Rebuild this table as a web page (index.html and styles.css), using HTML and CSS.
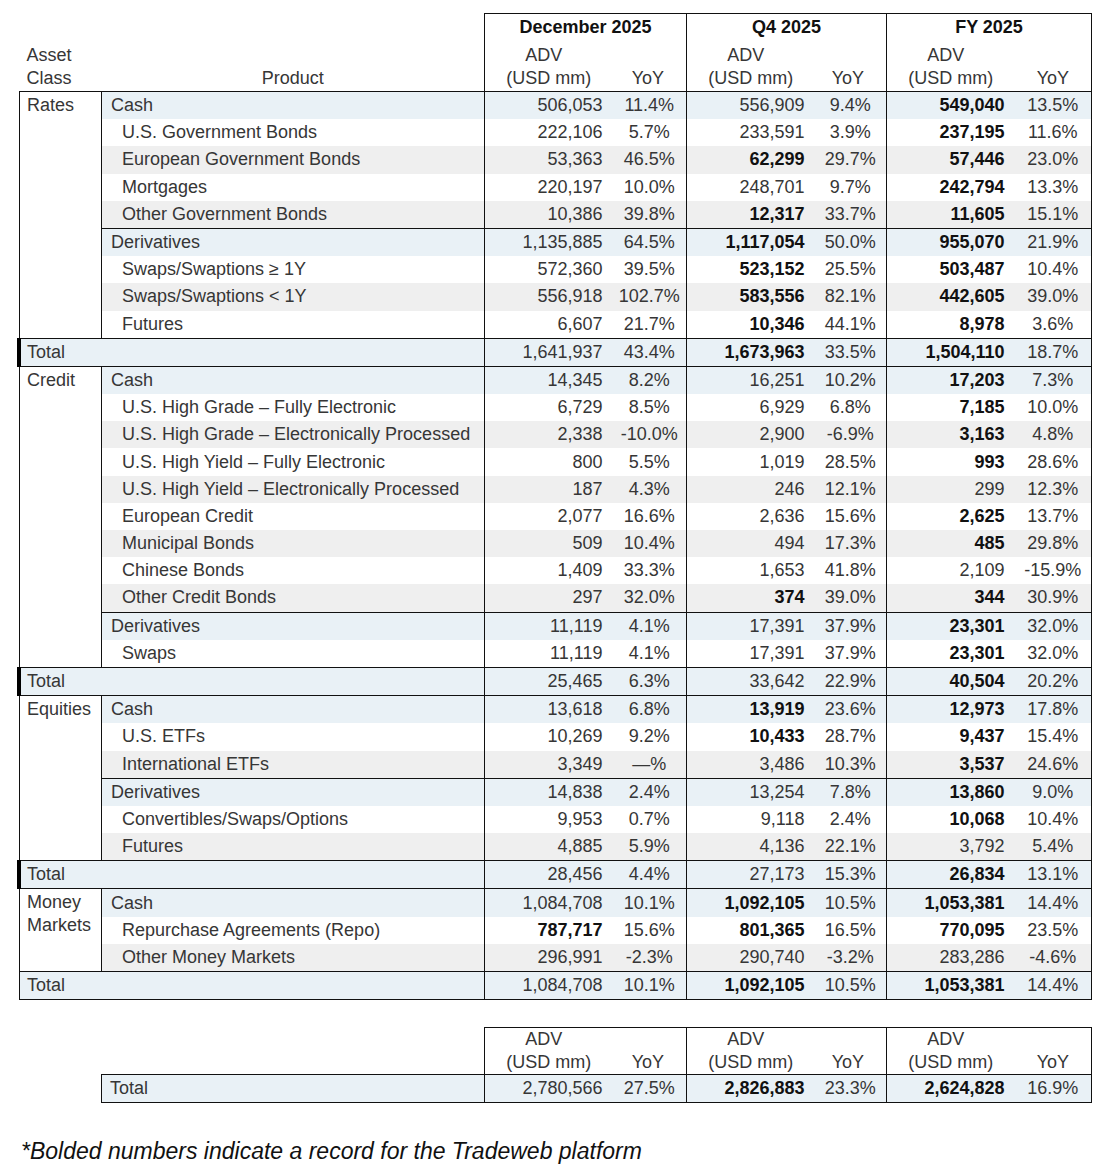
FILE: index.html
```html
<!DOCTYPE html>
<html lang="en">
<head>
<meta charset="utf-8">
<title>Tradeweb ADV</title>
<link rel="stylesheet" href="styles.css">
</head>
<body>
<div class="page">
<table class="adv">
  <colgroup>
    <col class="c-asset"><col class="c-prod">
    <col class="c-num"><col class="c-yoy1">
    <col class="c-num"><col class="c-yoy2">
    <col class="c-num"><col class="c-yoy3">
  </colgroup>
  <thead>
    <tr class="h1">
      <th colspan="2" class="blank"></th>
      <th colspan="2" class="sec">December 2025</th>
      <th colspan="2" class="sec">Q4 2025</th>
      <th colspan="2" class="sec">FY 2025</th>
    </tr>
    <tr class="h2">
      <th class="asset-h">Asset<br>Class</th>
      <th class="prod-h">Product</th>
      <th class="adv-h"><span class="adv-l">ADV</span><br>(USD mm)</th><th class="yoy-h">YoY</th>
      <th class="adv-h"><span class="adv-l">ADV</span><br>(USD mm)</th><th class="yoy-h">YoY</th>
      <th class="adv-h"><span class="adv-l">ADV</span><br>(USD mm)</th><th class="yoy-h">YoY</th>
    </tr>
  </thead>
  <tbody>
    <tr class="cat"><td class="asset" rowspan="9">Rates</td><td class="prod">Cash</td><td>506,053</td><td>11.4%</td><td>556,909</td><td>9.4%</td><td><b>549,040</b></td><td>13.5%</td></tr>
    <tr class="sub"><td class="prod">U.S. Government Bonds</td><td>222,106</td><td>5.7%</td><td>233,591</td><td>3.9%</td><td><b>237,195</b></td><td>11.6%</td></tr>
    <tr class="sub alt"><td class="prod">European Government Bonds</td><td>53,363</td><td>46.5%</td><td><b>62,299</b></td><td>29.7%</td><td><b>57,446</b></td><td>23.0%</td></tr>
    <tr class="sub"><td class="prod">Mortgages</td><td>220,197</td><td>10.0%</td><td>248,701</td><td>9.7%</td><td><b>242,794</b></td><td>13.3%</td></tr>
    <tr class="sub alt"><td class="prod">Other Government Bonds</td><td>10,386</td><td>39.8%</td><td><b>12,317</b></td><td>33.7%</td><td><b>11,605</b></td><td>15.1%</td></tr>
    <tr class="cat split"><td class="prod">Derivatives</td><td>1,135,885</td><td>64.5%</td><td><b>1,117,054</b></td><td>50.0%</td><td><b>955,070</b></td><td>21.9%</td></tr>
    <tr class="sub"><td class="prod">Swaps/Swaptions ≥ 1Y</td><td>572,360</td><td>39.5%</td><td><b>523,152</b></td><td>25.5%</td><td><b>503,487</b></td><td>10.4%</td></tr>
    <tr class="sub alt"><td class="prod">Swaps/Swaptions &lt; 1Y</td><td>556,918</td><td>102.7%</td><td><b>583,556</b></td><td>82.1%</td><td><b>442,605</b></td><td>39.0%</td></tr>
    <tr class="sub"><td class="prod">Futures</td><td>6,607</td><td>21.7%</td><td><b>10,346</b></td><td>44.1%</td><td><b>8,978</b></td><td>3.6%</td></tr>
    <tr class="total"><td colspan="2" class="tot mark">Total</td><td>1,641,937</td><td>43.4%</td><td><b>1,673,963</b></td><td>33.5%</td><td><b>1,504,110</b></td><td>18.7%</td></tr>

    <tr class="cat"><td class="asset" rowspan="11">Credit</td><td class="prod">Cash</td><td>14,345</td><td>8.2%</td><td>16,251</td><td>10.2%</td><td><b>17,203</b></td><td>7.3%</td></tr>
    <tr class="sub"><td class="prod">U.S. High Grade – Fully Electronic</td><td>6,729</td><td>8.5%</td><td>6,929</td><td>6.8%</td><td><b>7,185</b></td><td>10.0%</td></tr>
    <tr class="sub alt"><td class="prod">U.S. High Grade – Electronically Processed</td><td>2,338</td><td>-10.0%</td><td>2,900</td><td>-6.9%</td><td><b>3,163</b></td><td>4.8%</td></tr>
    <tr class="sub"><td class="prod">U.S. High Yield – Fully Electronic</td><td>800</td><td>5.5%</td><td>1,019</td><td>28.5%</td><td><b>993</b></td><td>28.6%</td></tr>
    <tr class="sub alt"><td class="prod">U.S. High Yield – Electronically Processed</td><td>187</td><td>4.3%</td><td>246</td><td>12.1%</td><td>299</td><td>12.3%</td></tr>
    <tr class="sub"><td class="prod">European Credit</td><td>2,077</td><td>16.6%</td><td>2,636</td><td>15.6%</td><td><b>2,625</b></td><td>13.7%</td></tr>
    <tr class="sub alt"><td class="prod">Municipal Bonds</td><td>509</td><td>10.4%</td><td>494</td><td>17.3%</td><td><b>485</b></td><td>29.8%</td></tr>
    <tr class="sub"><td class="prod">Chinese Bonds</td><td>1,409</td><td>33.3%</td><td>1,653</td><td>41.8%</td><td>2,109</td><td>-15.9%</td></tr>
    <tr class="sub alt"><td class="prod">Other Credit Bonds</td><td>297</td><td>32.0%</td><td><b>374</b></td><td>39.0%</td><td><b>344</b></td><td>30.9%</td></tr>
    <tr class="cat split"><td class="prod">Derivatives</td><td>11,119</td><td>4.1%</td><td>17,391</td><td>37.9%</td><td><b>23,301</b></td><td>32.0%</td></tr>
    <tr class="sub"><td class="prod">Swaps</td><td>11,119</td><td>4.1%</td><td>17,391</td><td>37.9%</td><td><b>23,301</b></td><td>32.0%</td></tr>
    <tr class="total"><td colspan="2" class="tot mark">Total</td><td>25,465</td><td>6.3%</td><td>33,642</td><td>22.9%</td><td><b>40,504</b></td><td>20.2%</td></tr>

    <tr class="cat"><td class="asset" rowspan="6">Equities</td><td class="prod">Cash</td><td>13,618</td><td>6.8%</td><td><b>13,919</b></td><td>23.6%</td><td><b>12,973</b></td><td>17.8%</td></tr>
    <tr class="sub"><td class="prod">U.S. ETFs</td><td>10,269</td><td>9.2%</td><td><b>10,433</b></td><td>28.7%</td><td><b>9,437</b></td><td>15.4%</td></tr>
    <tr class="sub alt"><td class="prod">International ETFs</td><td>3,349</td><td>—%</td><td>3,486</td><td>10.3%</td><td><b>3,537</b></td><td>24.6%</td></tr>
    <tr class="cat split"><td class="prod">Derivatives</td><td>14,838</td><td>2.4%</td><td>13,254</td><td>7.8%</td><td><b>13,860</b></td><td>9.0%</td></tr>
    <tr class="sub"><td class="prod">Convertibles/Swaps/Options</td><td>9,953</td><td>0.7%</td><td>9,118</td><td>2.4%</td><td><b>10,068</b></td><td>10.4%</td></tr>
    <tr class="sub alt"><td class="prod">Futures</td><td>4,885</td><td>5.9%</td><td>4,136</td><td>22.1%</td><td>3,792</td><td>5.4%</td></tr>
    <tr class="total"><td colspan="2" class="tot mark">Total</td><td>28,456</td><td>4.4%</td><td>27,173</td><td>15.3%</td><td><b>26,834</b></td><td>13.1%</td></tr>

    <tr class="cat"><td class="asset" rowspan="3">Money<br>Markets</td><td class="prod">Cash</td><td>1,084,708</td><td>10.1%</td><td><b>1,092,105</b></td><td>10.5%</td><td><b>1,053,381</b></td><td>14.4%</td></tr>
    <tr class="sub"><td class="prod">Repurchase Agreements (Repo)</td><td><b>787,717</b></td><td>15.6%</td><td><b>801,365</b></td><td>16.5%</td><td><b>770,095</b></td><td>23.5%</td></tr>
    <tr class="sub alt"><td class="prod">Other Money Markets</td><td>296,991</td><td>-2.3%</td><td>290,740</td><td>-3.2%</td><td>283,286</td><td>-4.6%</td></tr>
    <tr class="total"><td colspan="2" class="tot">Total</td><td>1,084,708</td><td>10.1%</td><td><b>1,092,105</b></td><td>10.5%</td><td><b>1,053,381</b></td><td>14.4%</td></tr>
  </tbody>
</table>

<table class="adv grand">
  <colgroup>
    <col class="c-prod">
    <col class="c-num"><col class="c-yoy1">
    <col class="c-num"><col class="c-yoy2">
    <col class="c-num"><col class="c-yoy3">
  </colgroup>
  <thead>
    <tr class="h2 g-h">
      <th class="blank"></th>
      <th class="adv-h sec-l"><span class="adv-l">ADV</span><br>(USD mm)</th><th class="yoy-h sec-r">YoY</th>
      <th class="adv-h sec-l"><span class="adv-l">ADV</span><br>(USD mm)</th><th class="yoy-h sec-r">YoY</th>
      <th class="adv-h sec-l"><span class="adv-l">ADV</span><br>(USD mm)</th><th class="yoy-h sec-r">YoY</th>
    </tr>
  </thead>
  <tbody>
    <tr class="total"><td class="tot g-tot">Total</td><td>2,780,566</td><td>27.5%</td><td><b>2,826,883</b></td><td>23.3%</td><td><b>2,624,828</b></td><td>16.9%</td></tr>
  </tbody>
</table>

<p class="note">*Bolded numbers indicate a record for the Tradeweb platform</p>
</div>
</body>
</html>
```

FILE: styles.css
```css
html, body {
  margin: 0;
  padding: 0;
  background: #ffffff;
}

body {
  font-family: "Liberation Sans", Arial, sans-serif;
  font-size: 18px;
  color: #363636;
}

.page {
  padding: 13px 0 0 19px;
}

.adv {
  border-collapse: collapse;
  table-layout: fixed;
  width: 1072px;
}

.grand {
  width: 990px;
  margin: 27px 0 0 82px;
}

.c-asset { width: 82px; }
.c-prod { width: 383px; }
.c-num { width: 128px; }
.c-yoy1 { width: 74px; }
.c-yoy2 { width: 72px; }
.c-yoy3 { width: 77px; }

.adv th,
.adv td {
  padding: 0;
  font-weight: normal;
  white-space: nowrap;
}

/* header */
.h1 th {
  height: 27px;
  line-height: 27px;
}

.sec {
  font-weight: bold !important;
  color: #111;
  text-align: center;
  border-top: 1px solid #111;
  border-left: 1px solid #111;
  border-right: 1px solid #111;
}

.h2 th {
  height: 49px;
  vertical-align: bottom;
  line-height: 23px;
  padding-bottom: 1px;
  border-bottom: 1px solid #111;
}

.g-h th {
  height: 46px;
  padding-bottom: 0;
}

.g-h .blank {
  border-bottom: 1px solid #111;
}

.g-h .sec-l {
  border-top: 1px solid #111;
  border-left: 1px solid #111;
}

.g-h .sec-r {
  border-top: 1px solid #111;
  border-right: 1px solid #111;
}

.asset-h {
  text-align: left;
  padding-left: 7px !important;
}

.prod-h {
  text-align: center;
}

.adv-h {
  text-align: center;
}

.adv-l {
  display: inline-block;
  padding-right: 10px;
}

.yoy-h {
  text-align: right;
  padding-right: 22px !important;
  border-right: 1px solid #111;
}

.h2 .prod-h {
  border-right: 1px solid #111;
}

/* body */
.adv tbody td {
  height: 27.2px;
  line-height: 27px;
  vertical-align: middle;
}

.adv tbody td:nth-last-child(6),
.adv tbody td:nth-last-child(4),
.adv tbody td:nth-last-child(2) {
  text-align: right;
  padding-right: 10px;
}

.adv tbody td:nth-last-child(5),
.adv tbody td:nth-last-child(3),
.adv tbody td:nth-last-child(1) {
  text-align: center;
  border-right: 1px solid #111;
}

.adv b {
  font-weight: bold;
  color: #111;
}

.asset {
  vertical-align: top !important;
  text-align: left;
  padding-left: 7px !important;
  line-height: 23px !important;
  padding-top: 2px !important;
  border-left: 1px solid #111;
  border-right: 1px solid #111;
  background: #ffffff;
}

.prod {
  text-align: left;
  padding-left: 20px !important;
  border-right: 1px solid #111;
}

.cat .prod {
  padding-left: 9px !important;
}

.cat td {
  background: #e9f1f6;
}

.cat td.asset {
  background: #ffffff;
}

.sub td {
  background: #ffffff;
}

.sub.alt td {
  background: #efefef;
}

.split td {
  border-top: 1px solid #111;
}

.total td {
  background: #e9f1f6;
  border-top: 1px solid #111;
  border-bottom: 1px solid #111;
}

.tot {
  text-align: left;
  padding-left: 7px !important;
  border-left: 1px solid #111;
  border-right: 1px solid #111;
}

.g-tot {
  padding-left: 8px !important;
}

.mark {
  position: relative;
}

.mark::before {
  content: "";
  position: absolute;
  left: -3px;
  top: -1px;
  bottom: -1px;
  width: 4px;
  background: #000;
}

.note {
  margin: 35px 0 0 2px;
  font-style: italic;
  font-size: 23px;
  line-height: 26px;
  color: #111;
}
```
